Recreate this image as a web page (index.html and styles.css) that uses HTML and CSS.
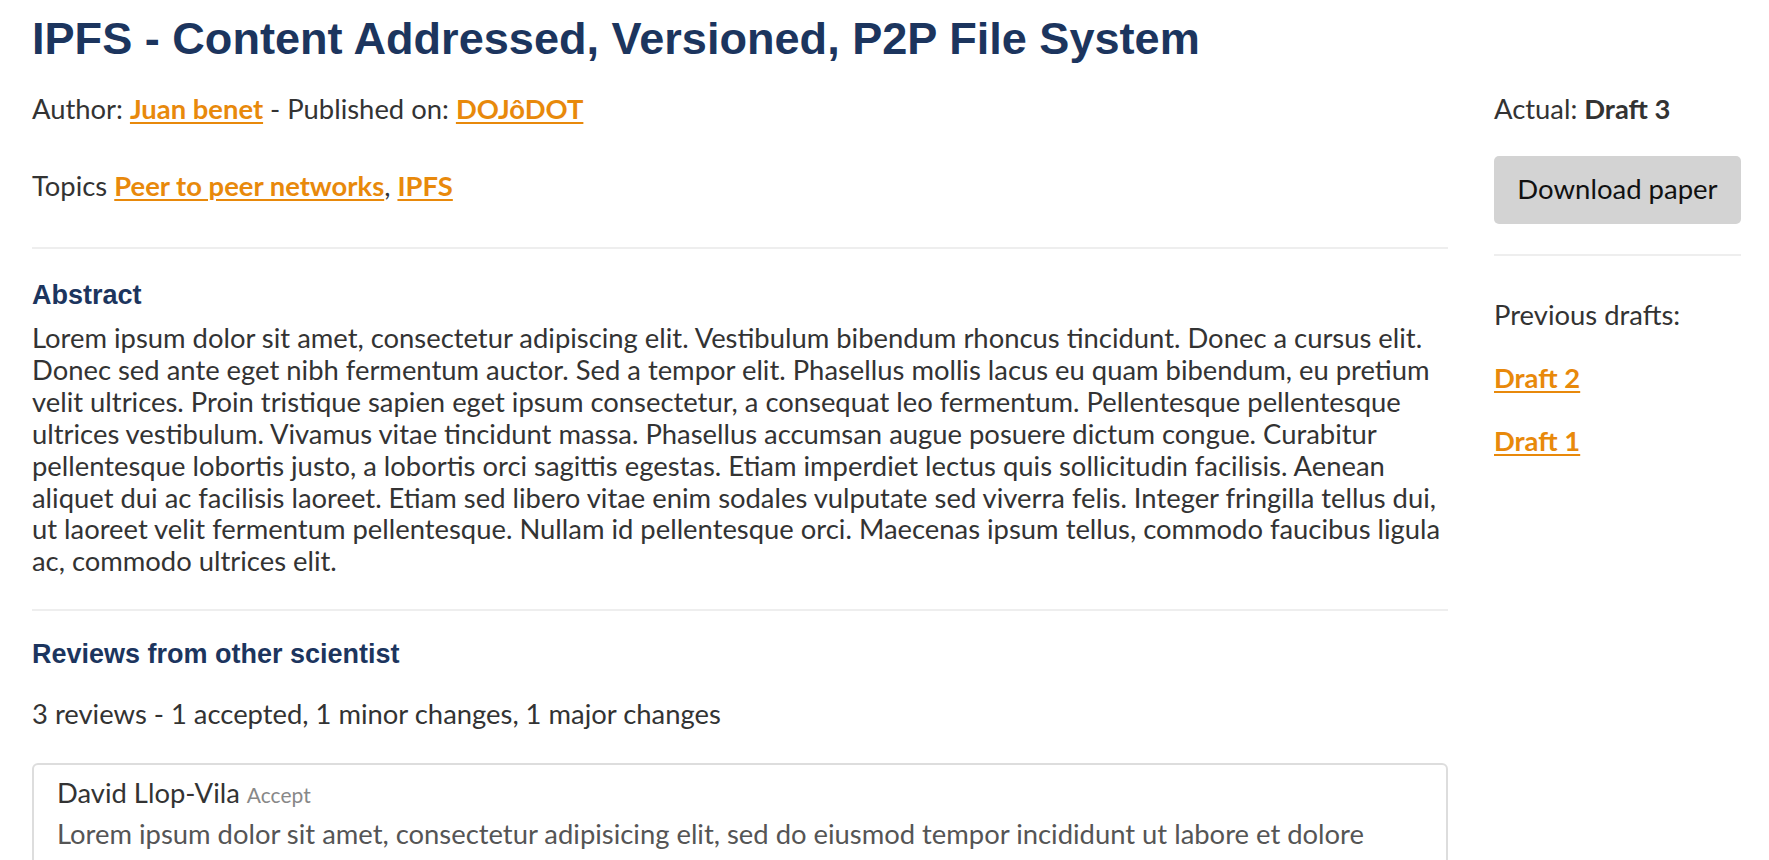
FILE: index.html
```html
<!DOCTYPE html>
<html lang="en">
<head>
<meta charset="utf-8">
<title>IPFS - Content Addressed, Versioned, P2P File System</title>
<link rel="stylesheet" href="styles.css">
</head>
<body>
<div class="page">
  <main class="main">
    <h1 class="title">IPFS - Content Addressed, Versioned, P2P File System</h1>
    <p class="meta">Author: <a class="link" href="#">Juan benet</a> - Published on: <a class="link" href="#">DOJôDOT</a></p>
    <p class="topics">Topics <a class="link" href="#">Peer to peer networks</a>, <a class="link" href="#">IPFS</a></p>
    <div class="rule rule-first"></div>
    <section class="abstract">
      <h2 class="section-title">Abstract</h2>
      <p class="abstract-text">Lorem ipsum dolor sit amet, consectetur adipiscing elit. Vestibulum bibendum rhoncus tincidunt. Donec a cursus elit. Donec sed ante eget nibh fermentum auctor. Sed a tempor elit. Phasellus mollis lacus eu quam bibendum, eu pretium velit ultrices. Proin tristique sapien eget ipsum consectetur, a consequat leo fermentum. Pellentesque pellentesque ultrices vestibulum. Vivamus vitae tincidunt massa. Phasellus accumsan augue posuere dictum congue. Curabitur pellentesque lobortis justo, a lobortis orci sagittis egestas. Etiam imperdiet lectus quis sollicitudin facilisis. Aenean aliquet dui ac facilisis laoreet. Etiam sed libero vitae enim sodales vulputate sed viverra felis. Integer fringilla tellus dui, ut laoreet velit fermentum pellentesque. Nullam id pellentesque orci. Maecenas ipsum tellus, commodo faucibus ligula ac, commodo ultrices elit.</p>
    </section>
    <div class="rule rule-second"></div>
    <section class="reviews">
      <h2 class="section-title">Reviews from other scientist</h2>
      <p class="summary">3 reviews - 1 accepted, 1 minor changes, 1 major changes</p>
      <article class="review">
        <div class="review-head"><span class="reviewer">David Llop-Vila</span> <span class="verdict">Accept</span></div>
        <p class="review-text">Lorem ipsum dolor sit amet, consectetur adipisicing elit, sed do eiusmod tempor incididunt ut labore et dolore magna aliqua. Ut enim ad minim veniam, quis nostrud exercitation ullamco laboris nisi ut aliquip ex ea commodo consequat.</p>
      </article>
    </section>
  </main>
  <aside class="side">
    <p class="current">Actual: <strong class="current-draft">Draft 3</strong></p>
    <a class="download" href="#">Download paper</a>
    <div class="rule rule-side"></div>
    <p class="previous">Previous drafts:</p>
    <p class="draft draft-first"><a class="link" href="#">Draft 2</a></p>
    <p class="draft"><a class="link" href="#">Draft 1</a></p>
  </aside>
</div>
</body>
</html>
```

FILE: styles.css
```css
html, body {
  margin: 0;
  padding: 0;
  background: #ffffff;
}

body {
  font-family: "Lato", "Open Sans", sans-serif;
  font-size: 27.4px;
  line-height: 32px;
  color: #333333;
  overflow: hidden;
}

p, h1, h2 {
  margin: 0;
}

.page {
  display: flex;
  gap: 46px;
  padding: 0 28px 0 32px;
}

.main {
  flex: 1 1 auto;
  min-width: 0;
}

.side {
  flex: 0 0 247px;
  width: 247px;
}

.link {
  color: #e8890b;
  font-weight: 700;
  text-decoration: underline;
  text-decoration-thickness: 2px;
  text-underline-offset: 3px;
}

.title {
  font-family: "Liberation Sans", Arial, sans-serif;
  font-weight: 700;
  font-size: 45.1px;
  line-height: 54px;
  color: #1c355e;
  margin-top: 12px;
}

.meta {
  margin-top: 27px;
}

.topics {
  margin-top: 45px;
}

.rule {
  height: 0;
  border-top: 2px solid #eeeeee;
}

.rule-first {
  margin-top: 45px;
}

.section-title {
  font-family: "Liberation Sans", Arial, sans-serif;
  font-weight: 700;
  font-size: 27px;
  line-height: 32px;
  color: #1c355e;
}

.abstract .section-title {
  margin-top: 30px;
}

.abstract-text {
  margin-top: 11px;
  line-height: 31.9px;
}

.rule-second {
  margin-top: 32px;
}

.reviews .section-title {
  margin-top: 27px;
}

.summary {
  margin-top: 28px;
}

.review {
  margin-top: 33px;
  border: 2px solid #dddddd;
  border-radius: 6px;
  padding: 12px 23px 14px;
}

.reviewer {
  color: #333333;
}

.verdict {
  font-size: 21px;
  color: #888888;
}

.review-text {
  margin-top: 4px;
  line-height: 38px;
  color: #555555;
}

/* sidebar */
.current {
  margin-top: 93px;
}

.current-draft {
  font-weight: 700;
}

.download {
  display: block;
  margin-top: 31px;
  height: 68px;
  line-height: 66px;
  text-align: center;
  background: #d3d3d3;
  border-radius: 5px;
  color: #111111;
  text-decoration: none;
  font-size: 27.5px;
}

.rule-side {
  margin-top: 30px;
}

.previous {
  margin-top: 43px;
}

.draft {
  margin-top: 31px;
}

.draft-first {
  margin-top: 31px;
}
```
